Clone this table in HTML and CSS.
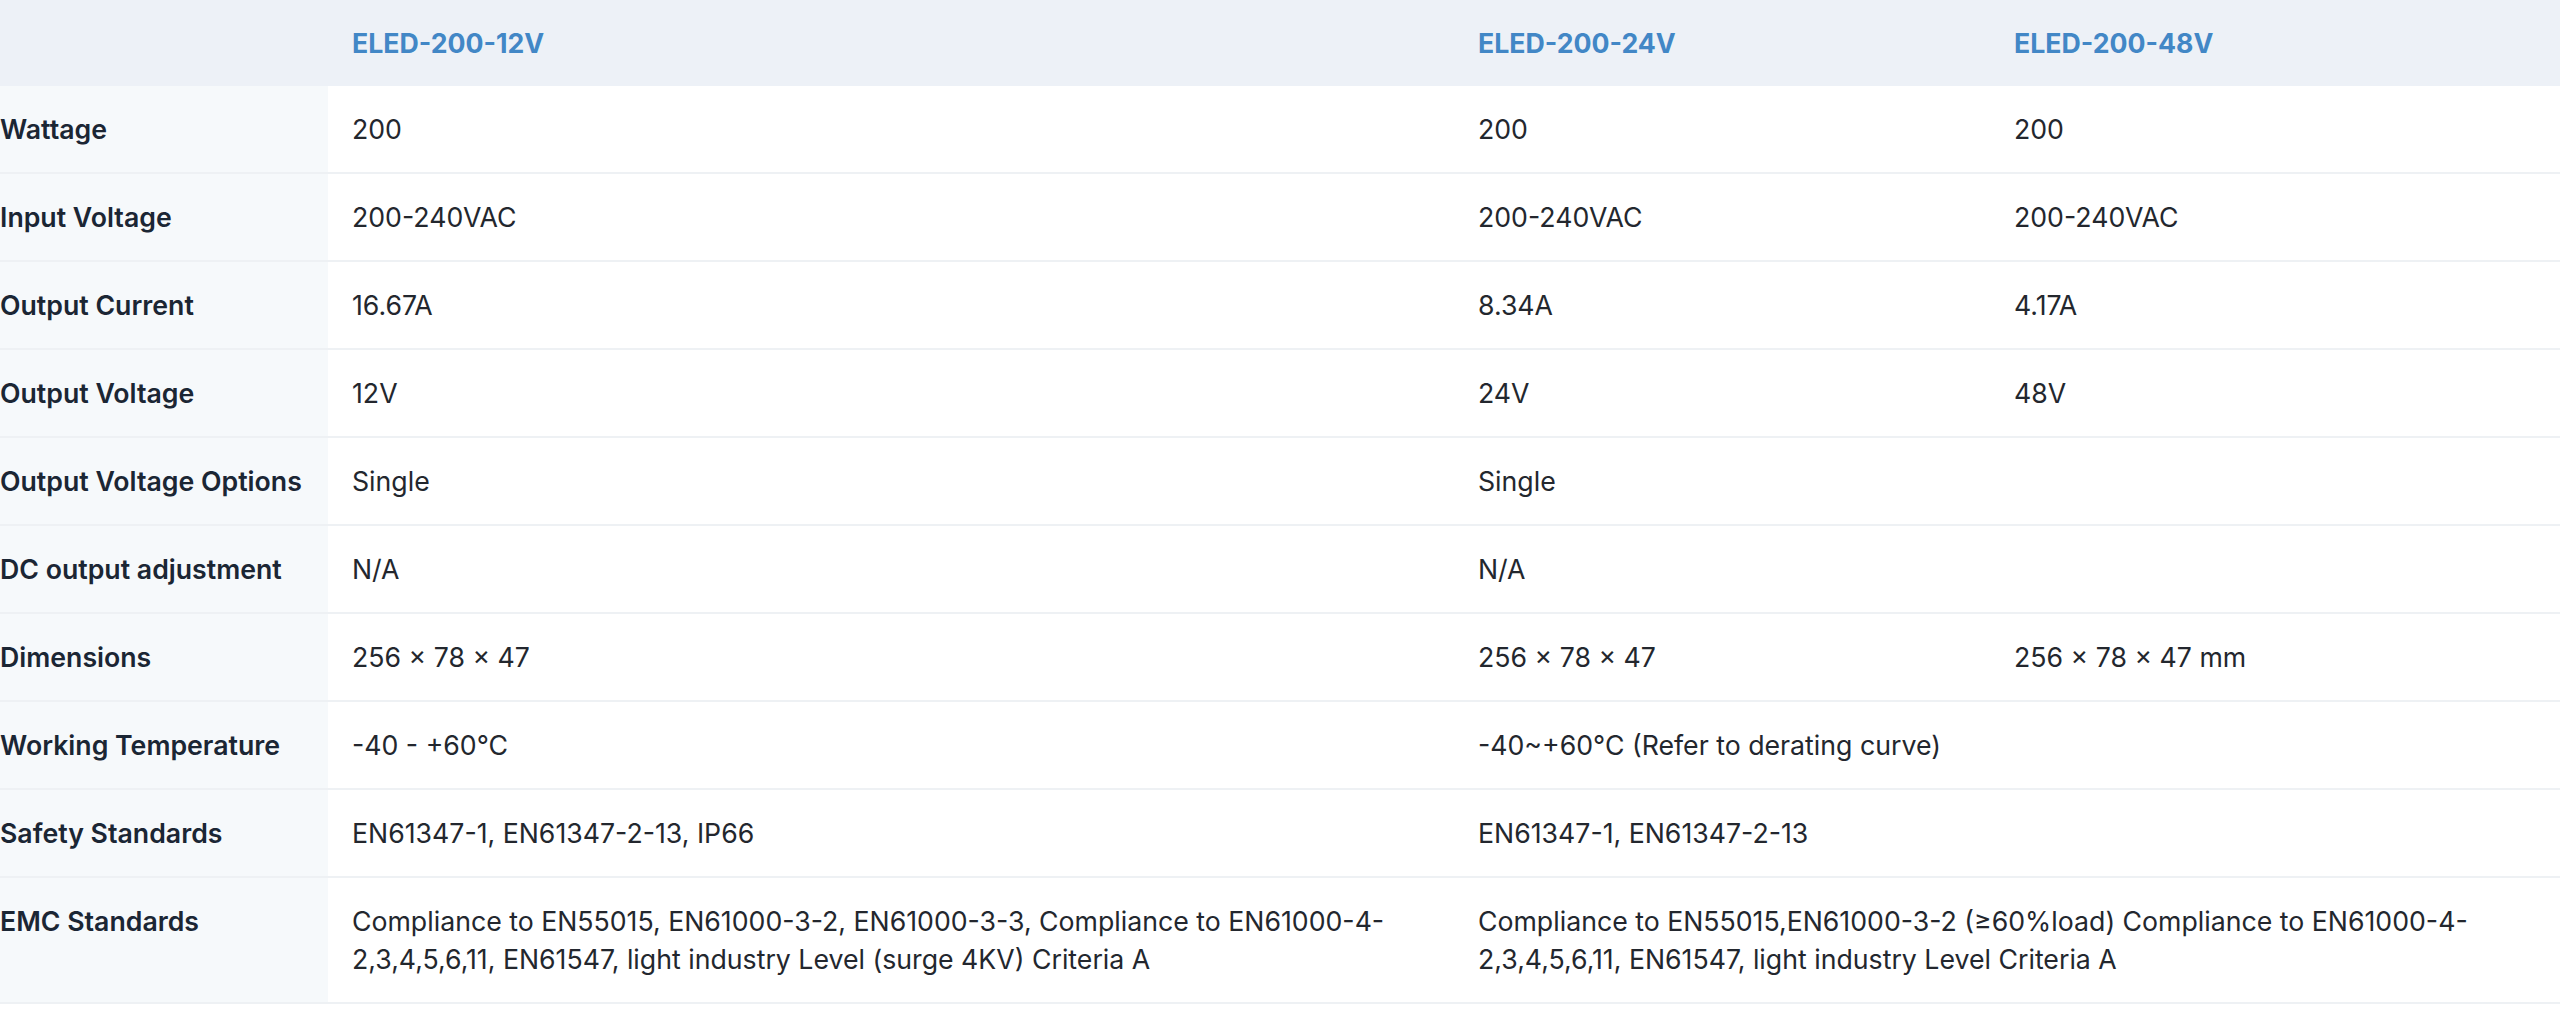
FILE: index.html
```html
<!DOCTYPE html>
<html lang="en">
<head>
<meta charset="utf-8">
<title>ELED-200 Specifications</title>
<link rel="stylesheet" href="styles.css">
</head>
<body>
<table class="spec">
  <colgroup>
    <col class="c-label">
    <col class="c-12">
    <col class="c-24">
    <col class="c-48">
  </colgroup>
  <thead>
    <tr>
      <th class="corner"></th>
      <th class="model">ELED-200-12V</th>
      <th class="model">ELED-200-24V</th>
      <th class="model">ELED-200-48V</th>
    </tr>
  </thead>
  <tbody>
    <tr><th class="label">Wattage</th><td>200</td><td>200</td><td>200</td></tr>
    <tr><th class="label">Input Voltage</th><td>200-240VAC</td><td>200-240VAC</td><td>200-240VAC</td></tr>
    <tr><th class="label">Output Current</th><td>16.67A</td><td>8.34A</td><td>4.17A</td></tr>
    <tr><th class="label">Output Voltage</th><td>12V</td><td>24V</td><td>48V</td></tr>
    <tr><th class="label">Output Voltage Options</th><td>Single</td><td colspan="2">Single</td></tr>
    <tr><th class="label">DC output adjustment</th><td>N/A</td><td colspan="2">N/A</td></tr>
    <tr><th class="label">Dimensions</th><td>256 × 78 × 47</td><td>256 × 78 × 47</td><td>256 × 78 × 47 mm</td></tr>
    <tr><th class="label">Working Temperature</th><td>-40 - +60°C</td><td colspan="2">-40~+60°C (Refer to derating curve)</td></tr>
    <tr><th class="label">Safety Standards</th><td>EN61347-1, EN61347-2-13, IP66</td><td colspan="2">EN61347-1, EN61347-2-13</td></tr>
    <tr><th class="label">EMC Standards</th><td>Compliance to EN55015, EN61000-3-2, EN61000-3-3, Compliance to EN61000-4-2,3,4,5,6,11, EN61547, light industry Level (surge 4KV) Criteria A</td><td colspan="2">Compliance to EN55015,EN61000-3-2 (≥60%load) Compliance to EN61000-4-2,3,4,5,6,11, EN61547, light industry Level Criteria A</td></tr>
  </tbody>
</table>
</body>
</html>
```

FILE: styles.css
```css
html, body {
  margin: 0;
  padding: 0;
  background: #ffffff;
}

body {
  font-family: Inter, "Noto Sans", "Liberation Sans", sans-serif;
  font-size: 26.7px;
  color: #1f2933;
}

.spec {
  width: 2560px;
  table-layout: fixed;
  border-collapse: collapse;
  border-spacing: 0;
}

.c-label { width: 328px; }
.c-12 { width: 1126px; }
.c-24 { width: 536px; }
.c-48 { width: 570px; }

.spec th,
.spec td {
  text-align: left;
  vertical-align: top;
  line-height: 38px;
  padding: 24px 24px;
}

.spec thead th {
  background: #edf1f7;
  height: 38px;
  border: 0;
}

.spec .model {
  color: #4287c6;
  font-weight: 700;
}

.spec tbody tr {
  border-bottom: 2px solid #eef1f4;
}

.spec .label {
  background: #f6f9fb;
  color: #1b2634;
  font-weight: 600;
  padding-left: 0;
  white-space: nowrap;
}

.spec td {
  color: #23272e;
  font-weight: 400;
}
```
